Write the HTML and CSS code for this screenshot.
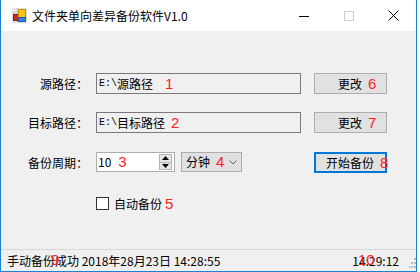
FILE: index.html
```html
<!DOCTYPE html>
<html lang="zh-CN">
<head>
    <meta charset="UTF-8">
    <title>文件夹单向差异备份软件V1.0</title>
    <link rel="stylesheet" href="styles.css">
</head>
<body>
    <div class="window">
        <div class="titlebar">
            <svg class="app-icon" width="15" height="15" viewBox="0 0 15 15">
                <rect x="0" y="0" width="15" height="15" fill="#e4e4e4"/>
                <path d="M0 5H15M0 10H15M5 0V15M10 0V15" stroke="#c4c4c4" stroke-width="1"/>
                <rect x="1.5" y="6.5" width="5" height="6" fill="#d02a1e" stroke="#9a1a12"/>
                <rect x="6.5" y="1.5" width="7" height="8" fill="#f7c716" stroke="#c89200"/>
                <rect x="6.5" y="9.5" width="7" height="4" fill="#3d7fd9" stroke="#2659a8"/>
            </svg>
            <span class="title">文件夹单向差异备份软件V1.0</span>
            <div class="controls">
                <span class="ctl">
                    <svg width="10" height="10" viewBox="0 0 10 10"><path d="M0 5.5H10" stroke="#000"/></svg>
                </span>
                <span class="ctl">
                    <svg width="10" height="10" viewBox="0 0 10 10"><rect x="0.5" y="0.5" width="9" height="9" fill="none" stroke="#cccccc"/></svg>
                </span>
                <span class="ctl">
                    <svg width="11" height="11" viewBox="0 0 11 11"><path d="M0.5 0.5L10.5 10.5M10.5 0.5L0.5 10.5" stroke="#000"/></svg>
                </span>
            </div>
        </div>

        <div class="content">
            <div class="row row-1">
                <span class="label">源路径：</span>
                <div class="textbox"><span class="drive">E:\</span><span class="path">源路径</span><span class="mark mark-1">1</span></div>
                <button class="btn btn-change">更改<span class="mark mark-6">6</span></button>
            </div>

            <div class="row row-2">
                <span class="label">目标路径：</span>
                <div class="textbox"><span class="drive">E:\</span><span class="path">目标路径</span><span class="mark mark-2">2</span></div>
                <button class="btn btn-change">更改<span class="mark mark-7">7</span></button>
            </div>

            <div class="row row-3">
                <span class="label">备份周期：</span>
                <div class="numeric">
                    <span class="num-value">10</span><span class="mark mark-3">3</span>
                    <div class="spinner">
                        <span class="spin-btn">
                            <svg width="7" height="4" viewBox="0 0 7 4"><path d="M3.5 0L7 4H0Z" fill="#000"/></svg>
                        </span>
                        <span class="spin-btn">
                            <svg width="7" height="4" viewBox="0 0 7 4"><path d="M0 0H7L3.5 4Z" fill="#000"/></svg>
                        </span>
                    </div>
                </div>
                <div class="combo">
                    <span>分钟</span><span class="mark mark-4">4</span>
                    <svg class="chevron" width="8" height="5" viewBox="0 0 8 5"><path d="M0.5 0.5L4 4L7.5 0.5" fill="none" stroke="#606060"/></svg>
                </div>
                <button class="btn btn-start">开始备份<span class="mark mark-8">8</span></button>
            </div>

            <div class="row row-4">
                <span class="checkbox"></span>
                <span class="check-label">自动备份</span><span class="mark mark-5">5</span>
            </div>
        </div>

        <div class="statusbar">
            <span class="status-text">手动备份成功 2018年28月23日 14:28:55</span>
            <span class="status-time">14:29:12</span>
            <svg class="grip" width="7" height="10" viewBox="0 0 7 10">
                <rect x="5" y="0" width="2" height="2" fill="#b8b8b8"/>
                <rect x="5" y="4" width="2" height="2" fill="#b8b8b8"/>
                <rect x="2" y="4" width="2" height="2" fill="#b8b8b8"/>
                <rect x="5" y="8" width="2" height="2" fill="#b8b8b8"/>
                <rect x="2" y="8" width="2" height="2" fill="#b8b8b8"/>
                <rect x="-1" y="8" width="2" height="2" fill="#b8b8b8"/>
            </svg>
            <span class="mark mark-9">9</span>
            <span class="mark mark-10">10</span>
        </div>
    </div>
</body>
</html>
```

FILE: styles.css
```css
body {
    margin: 0;
    background: #fff;
    font-family: "Noto Sans CJK SC", "Microsoft YaHei", sans-serif;
    font-size: 12px;
    color: #000;
}

.window {
    width: 417px;
    height: 272px;
    box-sizing: border-box;
    border: 1px solid #1883d7;
    border-top: none;
    background: #f0f0f0;
    display: flex;
    flex-direction: column;
}

/* barra de titulo */
.titlebar {
    height: 31px;
    flex-shrink: 0;
    background: #fff;
    display: flex;
    align-items: center;
}

.app-icon {
    margin-left: 11px;
    margin-top: -1px;
}

.title {
    margin-left: 5px;
    line-height: 16px;
}

.controls {
    margin-left: auto;
    display: flex;
    height: 100%;
}

.ctl {
    width: 45px;
    display: flex;
    align-items: center;
    justify-content: center;
}

/* formulario */
.content {
    flex: 1;
    padding-top: 42px;
}

.row {
    display: flex;
    align-items: center;
    height: 21px;
    white-space: nowrap;
}

.row-2 {
    margin-top: 18px;
}

.row-3 {
    margin-top: 19px;
}

.row-4 {
    margin-top: 20px;
}

.label {
    width: 87px;
    margin-right: 8px;
    text-align: right;
    line-height: 16px;
}

.mark {
    color: #ff1e1e;
    font-family: "Liberation Sans", sans-serif;
    font-size: 15px;
    line-height: 16px;
    flex-shrink: 0;
}

.textbox {
    width: 205px;
    height: 21px;
    box-sizing: border-box;
    border: 1px solid #7a7a7a;
    background: #f0f0f0;
    display: flex;
    align-items: center;
    padding-left: 2px;
}

.drive {
    font-family: "Liberation Mono", monospace;
    font-size: 10px;
    line-height: 14px;
}

.path {
    line-height: 16px;
}

.mark-1 {
    margin-left: 12px;
}

.mark-2 {
    margin-left: 6px;
}

.btn {
    box-sizing: border-box;
    height: 21px;
    width: 73px;
    flex-shrink: 0;
    padding: 0;
    margin: 0;
    font: inherit;
    color: #000;
    background: #e1e1e1;
    border: 1px solid #adadad;
    display: flex;
    align-items: center;
    line-height: 16px;
    white-space: nowrap;
}

.btn-change {
    margin-left: 13px;
    padding-left: 23px;
}

.mark-6,
.mark-7 {
    margin-left: 6px;
}

.numeric {
    width: 79px;
    height: 20px;
    box-sizing: border-box;
    border: 1px solid #adadad;
    background: #fff;
    display: flex;
    align-items: center;
    padding-left: 1px;
    margin-top: -1px;
}

.num-value {
    line-height: 16px;
}

.mark-3 {
    margin-left: 7px;
}

.spinner {
    margin-left: auto;
    margin-right: 2px;
    width: 13px;
    height: 16px;
    display: flex;
    flex-direction: column;
}

.spin-btn {
    flex: 1;
    background: #e6e6e6;
    border: 1px solid #b4b4b4;
    display: flex;
    align-items: center;
    justify-content: center;
}

.spin-btn + .spin-btn {
    border-top: none;
}

.combo {
    width: 61px;
    height: 20px;
    box-sizing: border-box;
    margin-left: 6px;
    margin-top: -1px;
    border: 1px solid #adadad;
    background: #e1e1e1;
    display: flex;
    align-items: center;
    padding-left: 4px;
    line-height: 16px;
}

.mark-4 {
    margin-left: 6px;
}

.chevron {
    margin-left: 5px;
}

.btn-start {
    margin-left: 72px;
    border: 2px solid #0078d7;
    padding-left: 10px;
    overflow: visible;
}

.mark-8 {
    margin-left: 6px;
}

.checkbox {
    width: 13px;
    height: 13px;
    box-sizing: border-box;
    margin-left: 95px;
    border: 1px solid #333;
    background: #fff;
}

.check-label {
    margin-left: 5px;
    line-height: 16px;
}

.mark-5 {
    margin-left: 3px;
}

/* barra de status */
.statusbar {
    position: relative;
    height: 22px;
    flex-shrink: 0;
    box-sizing: border-box;
    border-top: 1px solid #d7d7d7;
    display: flex;
    align-items: center;
    padding-left: 6px;
    line-height: 16px;
    white-space: nowrap;
}

.status-time {
    margin-left: auto;
    margin-right: 10px;
}

.grip {
    align-self: flex-end;
    margin-bottom: 3px;
}

.mark-9 {
    position: absolute;
    left: 50px;
    top: 2px;
}

.mark-10 {
    position: absolute;
    left: 357px;
    top: 2px;
}
```
